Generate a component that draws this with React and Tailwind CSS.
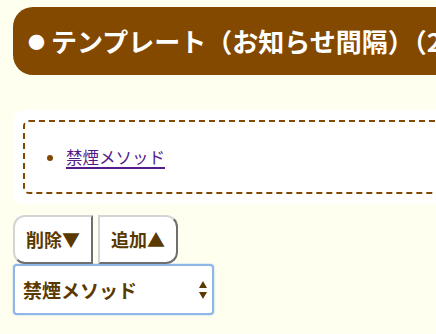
import React from "react";

const jp = { fontFamily: '"Noto Sans CJK JP", "Noto Sans", sans-serif' };

export default function App() {
  return (
    <div
      className="w-[436px] h-[334px] overflow-hidden bg-[#fffff0] pl-[13px] pt-[7px]"
      style={jp}
    >
      <div className="w-[560px] h-[68px] rounded-l-[20px] bg-[#834900] flex items-center pl-[15px]">
        <span className="text-white text-[17px] leading-none mr-[6px]">●</span>
        <span className="whitespace-nowrap text-white font-bold text-[26px] leading-none">
          テンプレート（お知らせ間隔）（2
        </span>
      </div>

      <div className="mt-[35px] w-[520px] h-[94px] rounded-[12px] bg-white p-[10px]">
        <div className="h-full border-2 border-dashed border-[#834900] rounded-[6px] flex items-center">
          <ul className="list-disc pl-[41px] marker:text-[#834900] text-[16.5px] leading-none">
            <li>
              <a href="#" className="text-[#551a8b] underline underline-offset-[3px] decoration-[1.5px]">
                禁煙メソッド
              </a>
            </li>
          </ul>
        </div>
      </div>

      <div className="mt-[11px] flex gap-[5px]">
        <button className="w-[80px] h-[49px] bg-white rounded-l-[12px] border-2 border-t-[#d4d4d4] border-l-[#d4d4d4] border-r-[#6f6f6f] border-b-[#6f6f6f] text-[#5a3900] font-bold text-[18px] flex items-center justify-center">
          削除▼
        </button>
        <button className="w-[80px] h-[49px] bg-white rounded-r-[12px] border-2 border-t-[#d4d4d4] border-l-[#d4d4d4] border-r-[#6f6f6f] border-b-[#6f6f6f] text-[#5a3900] font-bold text-[18px] flex items-center justify-center">
          追加▲
        </button>
      </div>

      <div className="w-[201px] h-[51px] bg-white rounded-[4px] border-2 border-[#8fb6e6] shadow-[0_0_2px_#9cc2ee] flex items-center justify-between pl-[8px] pr-[5px]">
        <span className="text-[#5a3900] font-bold text-[19px] leading-none">禁煙メソッド</span>
        <svg width="8" height="20" viewBox="0 0 8 20">
          <polygon points="4,1 8,8 0,8" fill="#5a3900" />
          <polygon points="0,12 8,12 4,19" fill="#5a3900" />
        </svg>
      </div>
    </div>
  );
}
